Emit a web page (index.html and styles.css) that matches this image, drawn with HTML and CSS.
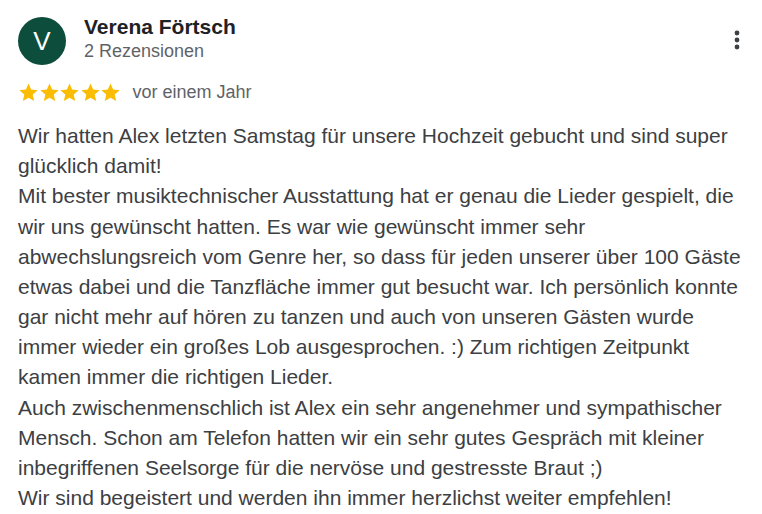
FILE: index.html
```html
<!DOCTYPE html>
<html lang="de">
<head>
<meta charset="utf-8">
<link rel="stylesheet" href="styles.css">
</head>
<body>
<div class="review">
  <div class="header">
    <div class="avatar">V</div>
    <div class="who">
      <div class="name">Verena Förtsch</div>
      <div class="count">2 Rezensionen</div>
    </div>
    <div class="more">
      <svg width="24" height="24" viewBox="0 0 24 24"><circle cx="12" cy="5" r="2.4" fill="#3c4043"/><circle cx="12" cy="12" r="2.4" fill="#3c4043"/><circle cx="12" cy="19" r="2.4" fill="#3c4043"/></svg>
    </div>
  </div>
  <div class="meta">
    <div class="stars">
      <svg viewBox="0 0 24 24"><path d="M12 1.8l3 6.9 7.5.7-5.7 5 1.7 7.4-6.5-3.9-6.5 3.9 1.7-7.4-5.7-5 7.5-.7z" fill="#fbbc04"/></svg>
      <svg viewBox="0 0 24 24"><path d="M12 1.8l3 6.9 7.5.7-5.7 5 1.7 7.4-6.5-3.9-6.5 3.9 1.7-7.4-5.7-5 7.5-.7z" fill="#fbbc04"/></svg>
      <svg viewBox="0 0 24 24"><path d="M12 1.8l3 6.9 7.5.7-5.7 5 1.7 7.4-6.5-3.9-6.5 3.9 1.7-7.4-5.7-5 7.5-.7z" fill="#fbbc04"/></svg>
      <svg viewBox="0 0 24 24"><path d="M12 1.8l3 6.9 7.5.7-5.7 5 1.7 7.4-6.5-3.9-6.5 3.9 1.7-7.4-5.7-5 7.5-.7z" fill="#fbbc04"/></svg>
      <svg viewBox="0 0 24 24"><path d="M12 1.8l3 6.9 7.5.7-5.7 5 1.7 7.4-6.5-3.9-6.5 3.9 1.7-7.4-5.7-5 7.5-.7z" fill="#fbbc04"/></svg>
    </div>
    <span class="date">vor einem Jahr</span>
  </div>
  <p class="text">Wir hatten Alex letzten Samstag für unsere Hochzeit gebucht und sind super glücklich damit!<br>Mit bester musiktechnischer Ausstattung hat er genau die Lieder gespielt, die wir uns gewünscht hatten. Es war wie gewünscht immer sehr abwechslungsreich vom Genre her, so dass für jeden unserer über 100 Gäste etwas dabei und die Tanzfläche immer gut besucht war. Ich persönlich konnte gar nicht mehr auf hören zu tanzen und auch von unseren Gästen wurde immer wieder ein großes Lob ausgesprochen. :) Zum richtigen Zeitpunkt kamen immer die richtigen Lieder.<br>Auch zwischenmenschlich ist Alex ein sehr angenehmer und sympathischer Mensch. Schon am Telefon hatten wir ein sehr gutes Gespräch mit kleiner inbegriffenen Seelsorge für die nervöse und gestresste Braut ;)<br>Wir sind begeistert und werden ihn immer herzlichst weiter empfehlen!</p>
</div>
</body>
</html>
```
FILE: styles.css
```css
html, body { margin: 0; padding: 0; background: #fff; }
body { font-family: "Liberation Sans", Arial, sans-serif; color: #3c4043; }
.review { padding: 16px 18px 0 18px; }
.header { display: flex; align-items: flex-start; }
.avatar {
  width: 48px; height: 48px; border-radius: 50%;
  background: #0d4d3c; color: #fff;
  display: flex; align-items: center; justify-content: center;
  font-size: 26px; flex: none; margin-top: 1px;
}
.who { margin-left: 18px; flex: 1; }
.name { font-size: 21px; font-weight: bold; color: #202124; line-height: 24px; margin-top: -1px; }
.count { font-size: 18px; color: #5f6368; line-height: 24px; }
.more { margin-top: 12px; margin-right: -5px; }
.meta { display: flex; align-items: center; margin-top: 15px; height: 24px; }
.stars { display: flex; }
.stars svg { width: 21px; height: 21px; margin-right: -0.5px; }
.date { margin-left: 12px; font-size: 18px; color: #5f6368; }
.text { margin: 17px 0 0 0; font-size: 21px; line-height: 30.17px; color: #3c4043; }
```
